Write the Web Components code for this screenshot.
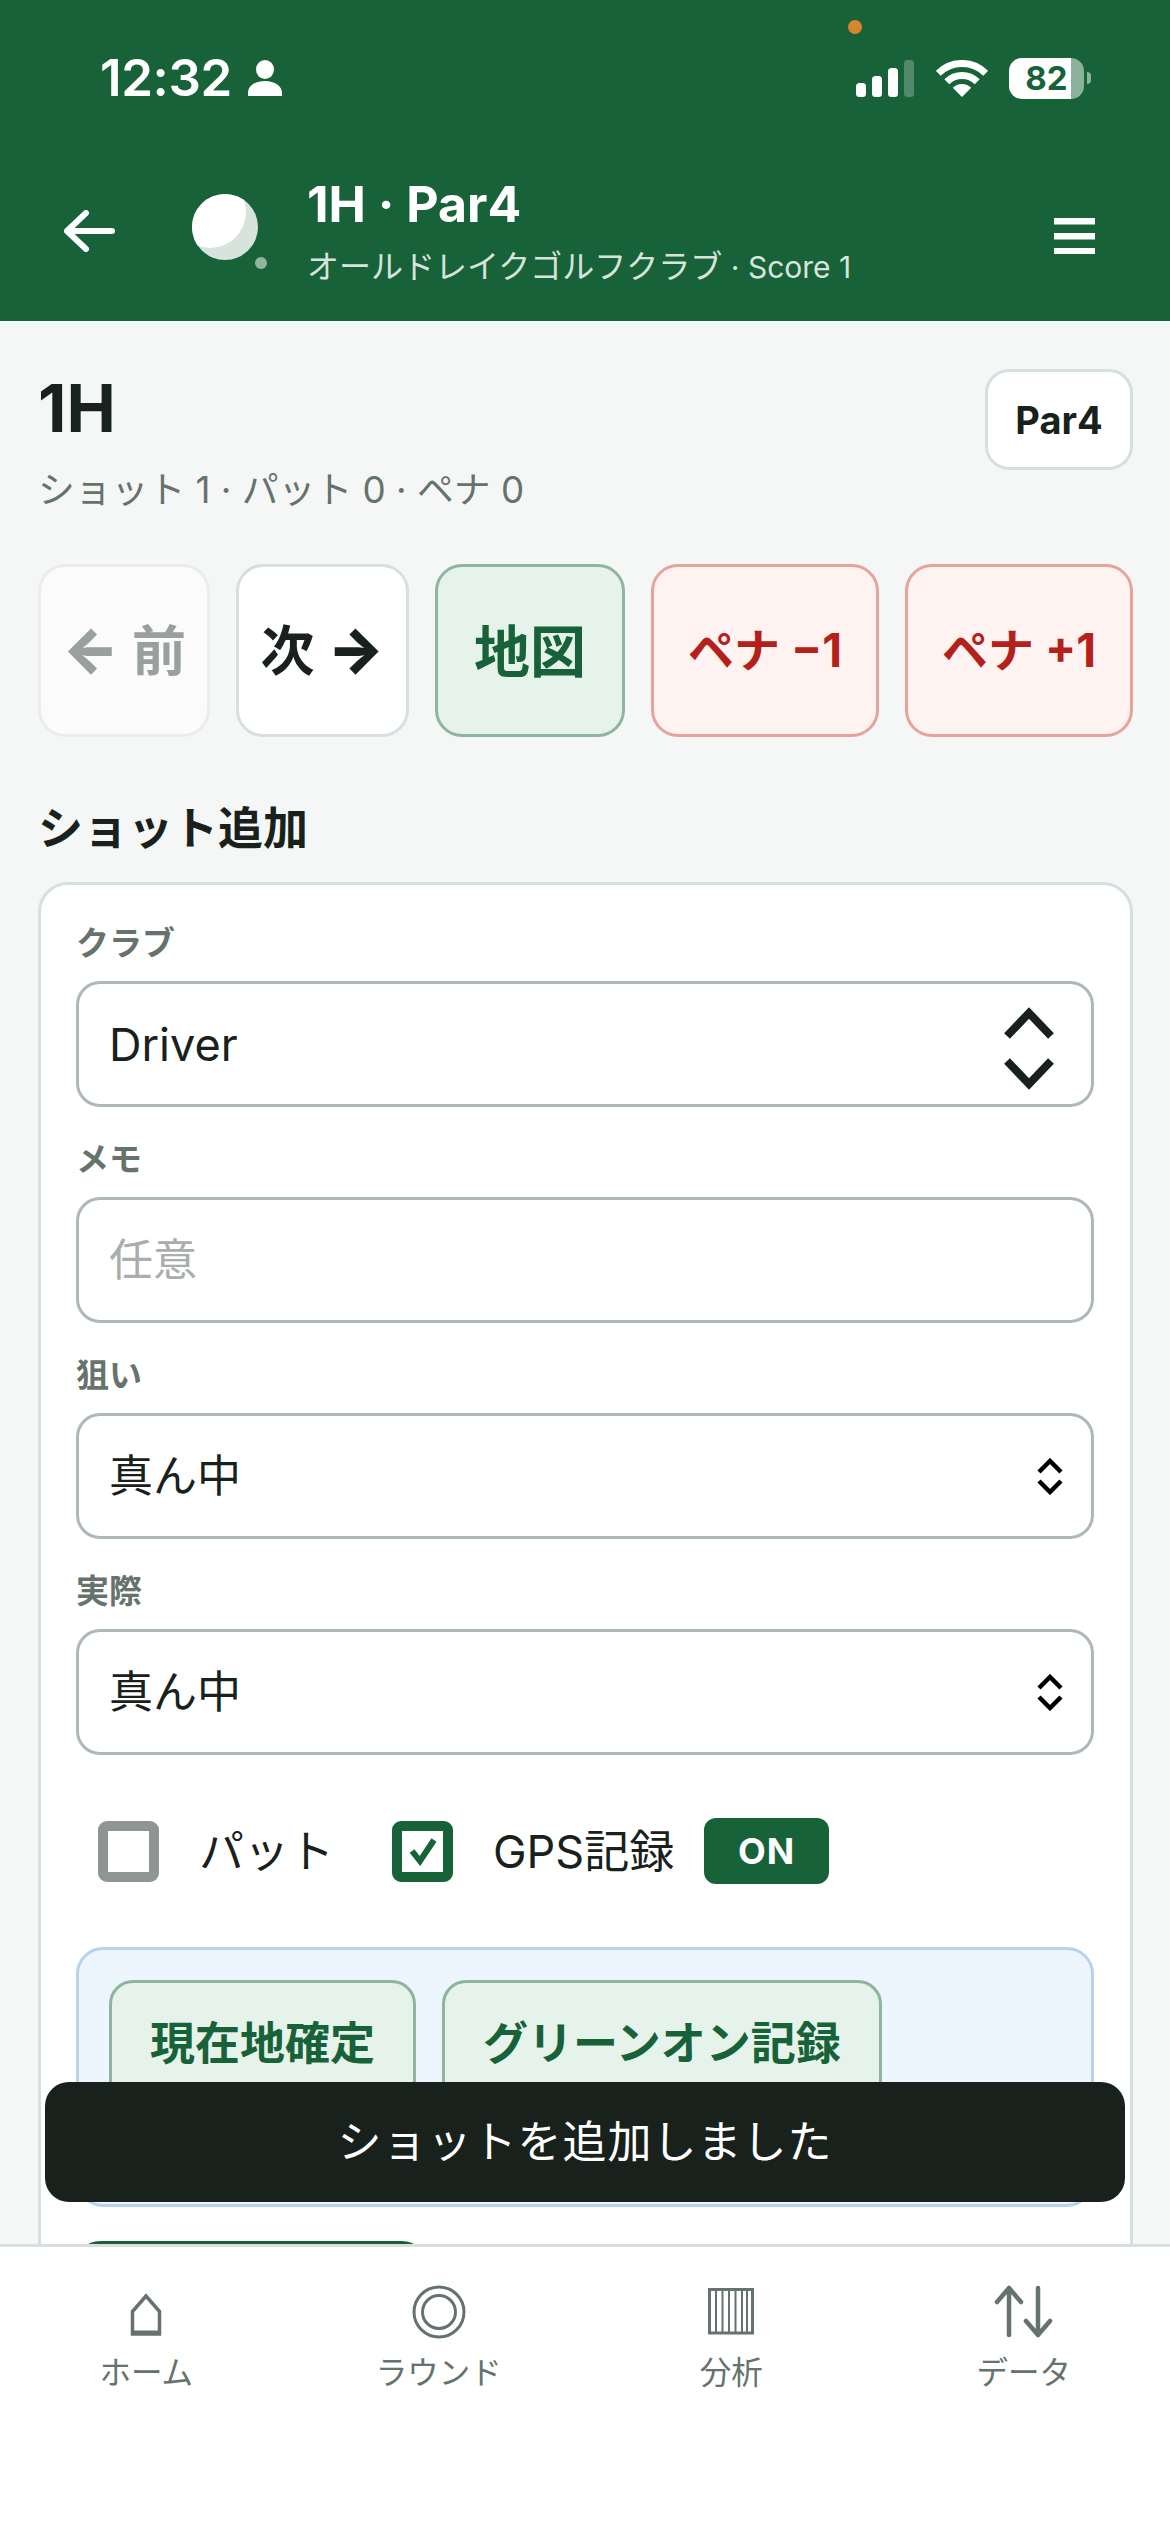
<!doctype html>
<html lang="ja"><head><meta charset="utf-8"><title>1H</title>
<style>
html,body{margin:0;padding:0;background:#f5f7f6}
body{font-family:Inter,"Noto Sans CJK JP",sans-serif;color:#18211c}
</style></head><body>
<golf-app>
  <status-bar slot="top"></status-bar>
  <app-header slot="top" title="1H · Par4" sub="オールドレイクゴルフクラブ" score=" · Score 1"></app-header>

  <hole-summary title="1H" sub="ショット 1 · パット 0 · ペナ 0" par="Par4"></hole-summary>
  <action-row>
    <action-button kind="off"><arrow-glyph>←</arrow-glyph> 前</action-button>
    <action-button>次 <arrow-glyph>→</arrow-glyph></action-button>
    <action-button kind="green">地図</action-button>
    <action-button kind="red">ペナ −1</action-button>
    <action-button kind="red">ペナ +1</action-button>
  </action-row>
  <section-title>ショット追加</section-title>
  <form-card>
    <form-field label="クラブ"><select-box big>Driver</select-box></form-field>
    <form-field label="メモ"><select-box plain placeholder>任意</select-box></form-field>
    <form-field label="狙い"><select-box>真ん中</select-box></form-field>
    <form-field label="実際"><select-box>真ん中</select-box></form-field>
    <check-row>
      <check-item>パット</check-item>
      <check-item checked>GPS記録</check-item>
      <on-badge>ON</on-badge>
    </check-row>
    <gps-panel>
      <gps-button>現在地確定</gps-button>
      <gps-button>グリーンオン記録</gps-button>
    </gps-panel>
    <primary-block></primary-block>
  </form-card>

  <toast-message slot="over">ショットを追加しました</toast-message>

  <bottom-nav slot="bottom">
    <nav-item icon="home">ホーム</nav-item>
    <nav-item icon="round">ラウンド</nav-item>
    <nav-item icon="stats">分析</nav-item>
    <nav-item icon="data">データ</nav-item>
  </bottom-nav>
</golf-app>
<script>
const FONT='Inter,"Noto Sans CJK JP",sans-serif';
function def(name,css,html,init){
  customElements.define(name,class extends HTMLElement{
    connectedCallback(){
      if(this.shadowRoot)return;
      const r=this.attachShadow({mode:'open'});
      const attr=k=>this.getAttribute(k)||'';
      const body=typeof html==='function'?html(attr,this):html;
      r.innerHTML=`<style>${css}</style>${body}`;
      if(init)init(r,this);
    }
  });
}
def('golf-app',`
  :host{display:flex;flex-direction:column;position:relative;width:1170px;height:2532px;overflow:hidden;background:#f5f7f6}
  header{flex:none;background:#186239}
  main{flex:1;min-height:0;overflow:hidden;padding:0 37px 0 38px}
`,`<header><slot name="top"></slot></header><main><slot></slot></main><slot name="over"></slot><slot name="bottom"></slot>`);

def('status-bar',`
  :host{display:flex;position:relative;align-items:center;justify-content:space-between;height:56px;padding:50px 79px 24px 100px;color:#fff}
  .l{display:flex;align-items:center;gap:16px;font:600 51px/56px ${FONT};letter-spacing:-.4px}
  .r{display:flex;align-items:center}
  .dot{position:absolute;left:848px;top:20px;width:14px;height:14px;border-radius:50%;background:#d5862e}
  .wifi{margin:0 21px 0 22px}
  .bat{display:block;width:75px;height:41px;border-radius:13px;text-align:center;color:#186239;font:700 33px/41px ${FONT};background:linear-gradient(90deg,#fff 62px,rgba(255,255,255,.5) 62px)}
  .nub{width:4px;height:12px;margin-left:3px;border-radius:0 6px 6px 0;background:rgba(255,255,255,.5)}
`,`<div class="l"><span>12:32</span><svg width="34" height="36" viewBox="0 0 34 36" fill="#fff"><ellipse cx="17" cy="9.5" rx="9" ry="9.5"/><path d="M0 36v-3C0 26 7 21 17 21s17 5 17 12v3z"/></svg></div>
<span class="dot"></span>
<div class="r">
<svg width="58" height="37" viewBox="0 0 58 37" fill="#fff"><rect y="23" width="10" height="14" rx="3.5"/><rect x="16" y="16" width="10" height="21" rx="3.5"/><rect x="32" y="8" width="10" height="29" rx="3.5"/><rect x="48" width="10" height="37" rx="3.5" opacity=".25"/></svg>
<svg class="wifi" width="52" height="37" viewBox="0 0 52 37" fill="none" stroke="#fff" stroke-width="7"><path d="M2.3 13.3A33.5 33.5 0 0 1 49.7 13.3"/><path d="M10.8 21.8A21.5 21.5 0 0 1 41.2 21.8"/><path d="M26 37 16.8 27.8A13 13 0 0 1 35.2 27.8Z" fill="#fff" stroke="none"/></svg>
<span class="bat">82</span><span class="nub"></span>
</div>`);

def('app-header',`
  :host{display:flex;align-items:center;padding:44px 75px 33px 64px;color:#fff}
  .ball{flex:none;margin:0 39px 0 77px;overflow:visible}
  .t{flex:1;min-width:0}
  .a{font:700 50px/60px ${FONT};}
  .b{margin-top:11px;margin-bottom:-1px;font:400 32px/44px ${FONT};color:#d7e3dd}
  .b span{font-size:30px}
  .menu{flex:none;margin-top:10px}
`,a=>`<svg width="51" height="42" viewBox="0 0 51 42" fill="none" stroke="#fff" stroke-width="6" stroke-linecap="round" stroke-linejoin="round"><path d="M3 21H48M22 3 3 21 22 39"/></svg>
<svg class="ball" width="76" height="75" viewBox="0 0 76 75"><defs><clipPath id="c"><circle cx="33" cy="33" r="33"/></clipPath></defs><circle cx="33" cy="33" r="33" fill="#d7e3dd"/><circle cx="18" cy="18" r="36" fill="#fff" clip-path="url(#c)"/><circle cx="69" cy="69" r="6" fill="#8fb59e"/></svg>
<div class="t"><div class="a">${a('title')}</div><div class="b">${a('sub')}<span>${a('score')}</span></div></div>
<svg class="menu" width="41" height="36" viewBox="0 0 41 36" fill="#fff"><rect width="41" height="6.5"/><rect y="15" width="41" height="6.5"/><rect y="30" width="41" height="6.5"/></svg>`);

def('hole-summary',`
  :host{display:flex;justify-content:space-between;align-items:flex-start;padding-top:47px;margin-bottom:49px}
  .h{font:700 66px/80px ${FONT};}
  .s{margin-top:17px;font:400 36.8px/50px ${FONT};color:#66726c}
  .p{box-sizing:border-box;width:148px;height:101px;margin-top:1px;border:3px solid #d7e0dc;border-radius:24px;background:#fff;display:flex;align-items:center;justify-content:center;font:700 38px/1 ${FONT};}
`,a=>`<div><div class="h">${a('title')}</div><div class="s">${a('sub')}</div></div><div class="p">${a('par')}</div>`);

def('action-row',`:host{display:grid;grid-template-columns:172px 173px 190px 228px 228px;gap:26px;height:173px}`,`<slot></slot>`);
def('action-button',`
  :host{box-sizing:border-box;display:block;text-align:center;padding-top:5px;border:3px solid #d7e0dc;border-radius:27px;background:#fff;font:700 54px/160px ${FONT};color:#18211c;white-space:nowrap}
  :host([kind=off]){background:#fafbfa;border-color:#e9edeb;color:#9aa09d}
  :host([kind=green]){background:#e6f3ea;border-color:#8fb59e;color:#186239;font-size:56px}
  :host([kind=red]){background:#fff3f1;border-color:#e6a39c;color:#b3211a;font-size:46px;padding-top:3px}
`,`<slot></slot>`);
def('arrow-glyph',`:host{display:inline;font-family:Inter,sans-serif;font-weight:900;font-size:60px;line-height:1}`,`<slot></slot>`);
def('section-title',`:host{display:block;margin:62px 0 23px;font:700 45px/60px ${FONT};}`,`<slot></slot>`);
def('form-card',`:host{display:block;box-sizing:border-box;height:1500px;padding:38px 36px 0 35px;border:3px solid #d7e0dc;border-radius:30px;background:#fff}`,`<slot></slot>`);
def('form-field',`
  :host{display:block;margin-bottom:32px}
  .l{margin-bottom:18px;font:600 33px/40px ${FONT};color:#66726c}
`,a=>`<div class="l">${a('label')}</div><slot></slot>`);
def('select-box',`
  :host{box-sizing:border-box;display:flex;align-items:center;justify-content:space-between;height:126px;padding:0 28px 0 30px;border:3px solid #adbab2;border-radius:24px;background:#fff;font:400 44px/1 ${FONT};color:#18211c}
  :host([big]){padding-right:37px;font-size:45px}
  :host([big]) svg{margin-top:9px}
  :host([placeholder]){color:#a9aeab}
`,(a,el)=>{
  if(el.hasAttribute('plain'))return `<slot></slot>`;
  if(el.hasAttribute('big'))return `<slot></slot><svg width="50" height="83" viewBox="0 0 50 83" fill="none" stroke="#18211c" stroke-width="8" stroke-linejoin="miter"><path d="M3 29 25 6 47 29M3 54 25 77 47 54"/></svg>`;
  return `<slot></slot><svg width="26" height="37" viewBox="0 0 26 37" fill="none" stroke="#000" stroke-width="4.5"><path d="M2 14 13 3 24 14M2 23 13 34 24 23"/></svg>`;
});
def('check-row',`:host{display:flex;align-items:center;height:66px;margin-top:63px;padding-left:22px}`,`<slot></slot>`);
def('check-item',`
  :host{display:flex;align-items:center;margin-right:58px;font:400 45px/1 ${FONT};color:#18211c}
  :host([checked]){margin-right:30px}
  .b{box-sizing:border-box;flex:none;width:61px;height:61px;margin-right:40px;border:10px solid #8f9691;border-radius:9px;background:#fff;display:flex;align-items:center;justify-content:center}
  :host([checked]) .b{border-color:#186239}
  svg{display:none}
  :host([checked]) svg{display:block}
`,`<span class="b"><svg width="30" height="30" viewBox="0 0 30 30" fill="none" stroke="#186239" stroke-width="6"><path d="M4 15 12 25 26 4"/></svg></span><slot></slot>`);
def('on-badge',`:host{display:flex;align-items:center;justify-content:center;width:125px;height:66px;border-radius:12px;background:#186239;color:#fff;font:700 36px/1 ${FONT};letter-spacing:1px}`,`<slot></slot>`);
def('gps-panel',`:host{box-sizing:border-box;display:flex;gap:26px;height:260px;margin-top:63px;padding:30px 30px 0;border:3px solid #b7d2eb;border-radius:27px;background:#eef6fd;align-items:flex-start}`,`<slot></slot>`);
def('gps-button',`:host{box-sizing:border-box;display:flex;align-items:center;justify-content:center;height:126px;padding:0 38px;border:3px solid #8fb59e;border-radius:24px;background:#e6f3ea;color:#186239;font:700 45px/1 ${FONT};white-space:nowrap}`,`<slot></slot>`);
def('primary-block',`:host{display:block;width:350px;height:126px;margin-top:34px;border-radius:24px;background:#186239}`,``);
def('toast-message',`:host{position:absolute;left:45px;right:45px;bottom:330px;height:120px;display:flex;align-items:center;justify-content:center;border-radius:24px;background:#18211c;color:#fff;font:400 44px/1 ${FONT};letter-spacing:1px}`,`<slot></slot>`);
def('bottom-nav',`:host{flex:none;box-sizing:border-box;display:grid;grid-template-columns:repeat(4,1fr);height:288px;padding-top:37px;border-top:3px solid #d7e0dc;background:#fff}`,`<slot></slot>`);
const icons={
 home:'<path d="M16.500 50V27.500L30 12 43.500 27.500V50Z" stroke-width="3.500"/><path d="M16 48.500H44" stroke-width="4"/>',
 round:'<circle cx="30" cy="28" r="25" stroke-width="3"/><circle cx="30" cy="28" r="16.500" stroke-width="3"/>',
 stats:'<path d="M8.500 5.500H51.500V49H8.500Z" stroke-width="3"/><path d="M15 5.500V49M21.500 5.500V49M28 5.500V49M34.500 5.500V49M41 5.500V49M46 5.500V49" stroke-width="2"/>',
 data:'<path d="M15 51V4M3 18 15 4 27 18M44 4V51M32 37 44 51 56 37" stroke-width="4.500" stroke-linecap="round" stroke-linejoin="round"/>'
};
def('nav-item',`
  :host{display:flex;flex-direction:column;align-items:center}
  svg{display:block;width:60px;height:56px}
  .l{margin-top:11px;font:400 31.5px/44px ${FONT};color:#66726c}
`,a=>`<svg viewBox="0 0 60 56" fill="none" stroke="#66726c">${icons[a('icon')]}</svg><div class="l"><slot></slot></div>`);
</script>
</body></html>
